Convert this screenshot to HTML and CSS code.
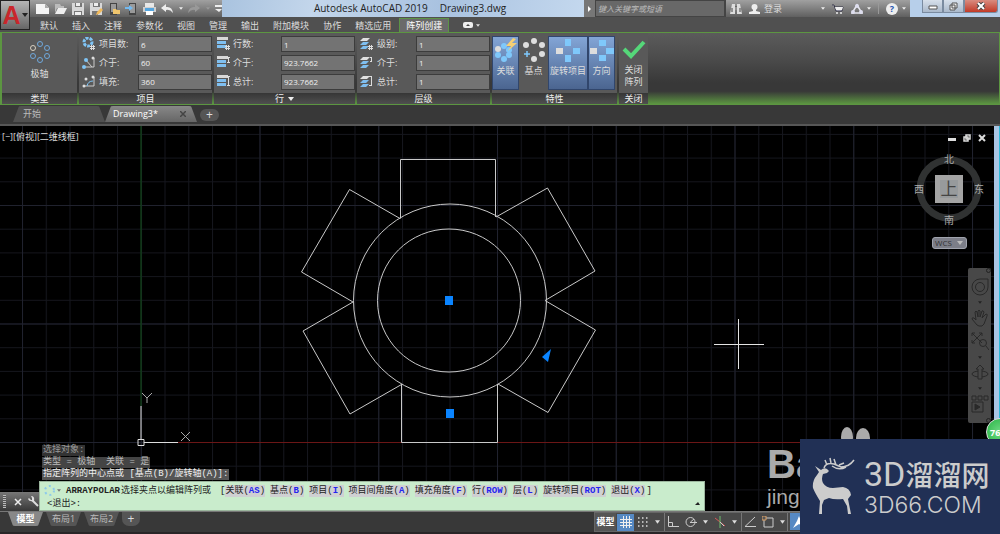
FILE: index.html
```
<!DOCTYPE html>
<html>
<head>
<meta charset="utf-8">
<title>Autodesk AutoCAD 2019 Drawing3.dwg</title>
<link rel="stylesheet" href="styles.css">
</head>
<body>
<svg class="defs" aria-hidden="true">
  <symbol id="caret" viewBox="0 0 6 4"><path d="M0 0H6L3 4Z" fill="currentColor"/></symbol>
  <symbol id="rows" viewBox="0 0 14 14"><path d="M0 0H11V3H0Z" fill="#d8d8d8"/><path d="M0 4H9V7H0ZM0 8H9V11H0Z" fill="#7fbff0"/></symbol>
  <symbol id="layers" viewBox="0 0 14 14"><path d="M3 1H10L7 4H0Z" fill="#e0e0e0"/><path d="M3 5H9L6 8H0ZM3 9H9L6 12H0Z" fill="#7fbff0"/></symbol>
</svg>

<header class="top">
  <button class="app" aria-label="菜单"><span class="logo">A</span><svg width="6" height="4"><use href="#caret"/></svg></button>
  <div class="title">
    <div class="quick">
      <button aria-label="新建"><svg width="13" height="12"><path d="M0 1H9L13 5V11H0Z" fill="#f4f4f4"/><path d="M9 1V5H13Z" fill="#aaa"/></svg></button>
      <button aria-label="打开"><svg width="13" height="12"><path d="M1 1H6L7 3H10V5H3L1 10Z" fill="#bbb"/><path d="M4 5H13L10 11H1Z" fill="#eee"/></svg></button>
      <button aria-label="保存"><svg width="13" height="12"><path d="M0 0H12V12H0Z" fill="#d8d8d8"/><path d="M3 0H10V4H3ZM2 8H10V12H2Z" fill="#777"/><path d="M4 0H8V3H4ZM3 9H9V12H3Z" fill="#eee"/></svg></button>
      <button aria-label="另存为"><svg width="13" height="12"><path d="M0 0H12V12H0Z" fill="#d8d8d8"/><path d="M3 0H10V4H3ZM2 8H8V12H2Z" fill="#777"/><path d="M4 0H8V3H4Z" fill="#eee"/><path d="M6 12L7 9L11 5L13 7L9 11Z" fill="#f0b95b"/></svg></button>
      <button aria-label="从移动设备打开"><svg width="13" height="12"><path d="M2 0H9V12H2Z" fill="#444"/><path d="M3 1H8V9H3Z" fill="#999"/><path d="M5 6H8L9 7H12V11H5Z" fill="#efc56d"/></svg></button>
      <button aria-label="保存到移动设备"><svg width="13" height="12"><path d="M4 0H11V12H4Z" fill="#444"/><path d="M5 1H10V10H5Z" fill="#999"/><path d="M0 4H4V2L8 5L4 8V6H0Z" fill="#74baf0"/></svg></button>
      <button aria-label="打印"><svg width="13" height="12"><path d="M2 0H11V4H2Z" fill="#e8e8e8"/><path d="M0 4H13V9H0Z" fill="#d0d0d0"/><path d="M2 5H11V8H2Z" fill="#54a4dd"/><path d="M3 8H10V12H3Z" fill="#fff"/></svg></button>
      <button aria-label="放弃"><svg width="13" height="12"><path d="M0 5L5 1V4Q11 3 12 10Q9 6 5 7V9Z" fill="#eee"/></svg></button>
      <svg class="light" width="4" height="3"><use href="#caret"/></svg>
      <button aria-label="重做"><svg width="13" height="12"><path d="M12 5L7 1V4Q1 3 0 10Q3 6 7 7V9Z" fill="#999"/></svg></button>
      <svg class="dim" width="4" height="3"><use href="#caret"/></svg>
      <button aria-label="自定义"><svg width="7" height="8"><path d="M0 0H7V2H0ZM0 4H7L4 7Z" fill="#eee"/></svg></button>
    </div>
    <div class="caption"><span>Autodesk AutoCAD 2019</span><span>Drawing3.dwg</span></div>
    <div class="search"><button class="arrow" aria-label="展开"><svg width="3" height="6"><path d="M0 0L3 3L0 6Z" fill="#fff"/></svg></button><input type="text" aria-label="搜索" placeholder="键入关键字或短语"></div>
    <div class="account">
      <button aria-label="查找"><svg width="12" height="12"><path d="M2 1H5V4H7V1H10L12 11H7V7H5V11H0Z" fill="#ddd"/><path d="M2 5V9M10 5V9M6 3V7" stroke="#444" stroke-width="1"/></svg></button>
      <button class="login"><svg width="11" height="12"><circle cx="5.500" cy="4" r="3" fill="#eee"/><path d="M4 6H7V8L11 9V11H0V9L4 8Z" fill="#eee"/></svg>登录</button>
      <svg class="light push" width="4" height="3"><use href="#caret"/></svg>
      <button aria-label="商店"><svg width="12" height="12"><path d="M0 2H2L4 8H10L11 4H3" fill="#dde" stroke="#334" stroke-width="1"/><path d="M3 4H11L10 7H4Z" fill="#eee"/><circle cx="5" cy="10" r="1" fill="#eee"/><circle cx="9" cy="10" r="1" fill="#eee"/></svg></button>
      <button class="pair" aria-label="应用"><svg width="12" height="12"><path d="M6 2L11 10H1Z" fill="none" stroke="#e8e8f0" stroke-width="1.500"/><circle cx="6" cy="3" r="2" fill="#dde"/><circle cx="2" cy="9" r="2" fill="#dde"/><circle cx="10" cy="9" r="2" fill="#dde"/></svg><svg class="light" width="4" height="3"><use href="#caret"/></svg></button>
      <i class="rule"></i>
      <button class="pair" aria-label="帮助"><span class="help">?</span><svg class="light" width="4" height="3"><use href="#caret"/></svg></button>
    </div>
    <div class="window">
      <button aria-label="最小化"><svg width="10" height="8"><path d="M1 4H9V7H1Z" fill="#fff" stroke="#555"/></svg></button><button aria-label="还原"><svg width="9" height="9"><path d="M3 1H8V6H3ZM1 3H6V8H1Z" fill="#eee" stroke="#555"/></svg></button><button class="close" aria-label="关闭"><svg width="10" height="8"><path d="M2 1L8 7M8 1L2 7" stroke="#444" stroke-width="4"/><path d="M2 1L8 7M8 1L2 7" stroke="#fff" stroke-width="2"/></svg></button>
    </div>
  </div>
  <nav class="menu">
    <a href="#">默认</a><a href="#">插入</a><a href="#">注释</a><a href="#">参数化</a><a href="#">视图</a><a href="#">管理</a><a href="#">输出</a><a href="#">附加模块</a><a href="#">协作</a><a href="#">精选应用</a><a href="#" class="on">阵列创建</a>
    <button aria-label="最小化功能区"><svg width="10" height="6"><rect width="10" height="6" rx="2" fill="#eee"/><path d="M3 4L5 2L7 4Z" fill="#444"/></svg><svg width="4" height="3"><use href="#caret"/></svg></button>
  </nav>
</header>

<section class="ribbon">
  <div class="panel type">
    <div class="body"><button class="tool"><svg width="24" height="25" fill="none" stroke="#6fa8dc"><circle cx="12" cy="4" r="2.500"/><circle cx="19" cy="8" r="2.500"/><circle cx="19" cy="16" r="2.500"/><circle cx="12" cy="20" r="2.500"/><circle cx="5" cy="16" r="2.500"/><circle cx="5" cy="8" r="2.500" stroke="#d8d0c0"/></svg>极轴</button></div>
    <h2>类型</h2>
  </div>
  <div class="panel items">
    <div class="body form">
      <svg width="14" height="14"><circle cx="6" cy="5" r="4" fill="none" stroke="#7fc4f5" stroke-width="3" stroke-dasharray="3 1"/><path d="M8 9.500H13M8 11.500H13M9.500 8V13M11.500 8V13" stroke="#ddd"/></svg><label for="n1">项目数:</label><input id="n1" value="6">
      <svg width="14" height="14"><path d="M3 3L10 11M12 2V11H3" stroke="#ccc" fill="none"/><circle cx="4" cy="4" r="2" fill="#7fc4f5"/><circle cx="2" cy="11" r="2" fill="#7fc4f5"/><circle cx="11" cy="2" r="1.500" fill="#ddd"/></svg><label for="n2">介于:</label><input id="n2" value="60">
      <svg width="14" height="14"><path d="M12 2V11H3" stroke="#ccc" fill="none"/><path d="M5 11Q6 6 11 6" stroke="#7fc4f5" fill="none"/><circle cx="4" cy="4" r="1.500" fill="#ddd"/><circle cx="2" cy="11" r="1.500" fill="#ddd"/><circle cx="11" cy="2" r="1.500" fill="#ddd"/></svg><label for="n3">填充:</label><input id="n3" value="360">
    </div>
    <h2>项目</h2>
  </div>
  <div class="panel rowset">
    <div class="body form">
      <svg width="14" height="14"><use href="#rows"/><path d="M8 9.500H13M8 11.500H13M9.500 8V13M11.500 8V13" stroke="#ddd"/></svg><label for="r1">行数:</label><input id="r1" value="1">
      <svg width="14" height="14"><use href="#rows"/><path d="M10 1.500H13M10 6.500H13M11.500 2V6" stroke="#ddd"/></svg><label for="r2">介于:</label><input id="r2" value="923.7662">
      <svg width="14" height="14"><use href="#rows"/><path d="M10 1.500H13M10 10.500H13M11.500 2V10" stroke="#ddd"/></svg><label for="r3">总计:</label><input id="r3" value="923.7662">
    </div>
    <h2>行 <svg width="6" height="4"><use href="#caret"/></svg></h2>
  </div>
  <div class="panel levels">
    <div class="body form">
      <svg width="14" height="14"><use href="#layers"/><path d="M8 9.500H13M8 11.500H13M9.500 8V13M11.500 8V13" stroke="#ddd"/></svg><label for="l1">级别:</label><input id="l1" value="1">
      <svg width="14" height="14"><use href="#layers"/><path d="M10 1.500H12M10 5.500H12M11.500 2V5" stroke="#ddd"/></svg><label for="l2">介于:</label><input id="l2" value="1">
      <svg width="14" height="14"><use href="#layers"/><path d="M9 1.500H12M9 10.500H12M11.500 2V10" stroke="#ddd"/></svg><label for="l3">总计:</label><input id="l3" value="1">
    </div>
    <h2>层级</h2>
  </div>
  <div class="panel props">
    <div class="body">
      <button class="tool on"><svg width="24" height="25" fill="#7fc8fb"><circle cx="4" cy="12" r="3" fill="#ddd"/><circle cx="10" cy="9" r="3"/><circle cx="15" cy="13" r="3"/><circle cx="15" cy="18" r="3"/><circle cx="10" cy="22" r="3"/><circle cx="4" cy="18" r="3"/><path d="M19 1L12 9H17L14 14L23 6H18L22 2Z" fill="#f6cf74"/></svg>关联</button>
      <button class="tool"><svg width="24" height="25" fill="#dedede"><circle cx="12" cy="4" r="3"/><circle cx="20" cy="8" r="3"/><circle cx="20" cy="17" r="3"/><circle cx="12" cy="22" r="3"/><circle cx="4" cy="8" r="3"/><path d="M2 17H8M5 14V20" stroke="#7fc8fb" stroke-width="1.500"/></svg>基点</button>
      <button class="tool wide on"><svg width="24" height="25" fill="#7fc8fb"><path d="M0 11H7V17H0Z" fill="#ddd"/><path d="M9 2H15V9H9ZM17 11H24V17H17ZM9 18H15V25H9Z"/></svg>旋转项目</button>
      <button class="tool on"><svg width="24" height="25" fill="#7fc8fb"><path d="M0 11H7V17H0Z" fill="#ddd"/><path d="M9 3H16V9H9ZM16 11H24V17H16ZM9 18H16V24H9Z"/></svg>方向</button>
    </div>
    <h2>特性</h2>
  </div>
  <div class="panel finish">
    <div class="body"><button class="tool"><svg width="24" height="25"><path d="M2 13L9 20L22 6" fill="none" stroke="#55d779" stroke-width="4"/></svg>关闭<br>阵列</button></div>
    <h2>关闭</h2>
  </div>
</section>

<nav class="files">
  <a href="#">开始</a><a href="#" class="on">Drawing3* <svg width="6" height="6"><path d="M0 0L6 6M6 0L0 6" stroke="#444" stroke-width="1.500"/></svg></a><button aria-label="新图形">+</button>
</nav>

<main class="canvas">
  <svg class="drawing" width="100%" height="100%">
    <defs>
      <pattern id="minor" x="22" y="79" width="23.750" height="23.700" patternUnits="userSpaceOnUse"><path d="M.5 0V24M0 .5H24" stroke="#15161d" fill="none"/></pattern>
      <pattern id="major" x="22" y="79" width="118.750" height="118.500" patternUnits="userSpaceOnUse"><path d="M.5 0V119M0 .5H119" stroke="#20222e" fill="none"/></pattern>
    </defs>
    <rect width="100%" height="100%" fill="url(#minor)"/><rect width="100%" height="100%" fill="url(#major)"/>
    <path d="M141 0V280" stroke="#0b4a10"/><path d="M178 316.500H4000" stroke="#6b1616"/>
    <g transform="translate(0 -126)" fill="none" stroke="#c9c9c9">
      <circle cx="450" cy="300.500" r="96.500"/><circle cx="449" cy="300.500" r="71.500"/>
      <path d="M400.500 218.500V159.500H495.500V217M496 217L547.500 188L595 271L545 300.500L595.500 330L548 412.500L498 384M401.500 384V442.500H497.500V384M401.500 384.500L350 414L303 331L353 302L301.500 272L349.500 189.500L400 218.500"/>
      <path d="M714 344.500H764M738.500 319V369" stroke="#e4e4e4"/>
      <path d="M141 439V406M144 442.500H178M138 439.500H144V445.500H138Z" stroke="#ddd"/>
      <path d="M142 393L147 398V403M152 393L147 398M181 432L190 441M190 432L181 441" stroke="#aaa"/>
      <path d="M445 296H453V305H445ZM446 409H454V418H446ZM551 349L542 357L548 362Z" fill="#0a84ff" stroke="none"/>
    </g>
  </svg>
  <button class="viewlabel">[−][俯视][二维线框]</button>
  <div class="mdi">
    <button aria-label="最小化"><svg width="8" height="8"><path d="M0 4H8V7H0Z" fill="#ddd"/></svg></button><button aria-label="还原"><svg width="8" height="8"><path d="M3 1H7V5H3ZM1 3H5V7H1Z" fill="#000" stroke="#ddd" stroke-width="1.500"/></svg></button><button aria-label="关闭"><svg width="8" height="8"><path d="M1 1L7 7M7 1L1 7" stroke="#ddd" stroke-width="2"/></svg></button>
  </div>
  <div class="cube">
    <svg width="78" height="78"><circle cx="39" cy="39" r="29" fill="none" stroke="#303232" stroke-width="7"/><rect x="25" y="25" width="28" height="28" fill="#a4a4a4"/><rect x="30" y="30" width="18" height="18" fill="#979a9c"/>
      <g text-anchor="middle" font-size="10" fill="#aaa"><text x="39" y="13">北</text><text x="39" y="74">南</text><text x="9" y="43">西</text><text x="69" y="43">东</text></g>
      <text x="39" y="45" text-anchor="middle" font-size="17" fill="#444">上</text></svg>
    <button>WCS <svg width="6" height="4"><use href="#caret"/></svg></button>
  </div>
  <div class="navbar">
    <svg width="5" height="5"><circle cx="2.500" cy="2.500" r="2" fill="none" stroke="#222"/></svg>
    <button aria-label="控制盘"><svg width="18" height="18" fill="none" stroke="#292929"><path d="M9 1H17V9A8 8 0 1 1 9 1Z"/><circle cx="9" cy="9" r="4.500"/></svg></button><svg class="drop" width="4" height="3"><use href="#caret"/></svg>
    <button aria-label="平移"><svg width="18" height="18" fill="none" stroke="#292929"><path d="M6 16L1 10Q1 8 3 9L5 11L4 3Q5 1 6 3L7 8V2Q8 0 9 2V8L11 2Q12 1 13 3L11 9L15 5Q17 5 16 7L13 15L11 17H8Z"/></svg></button>
    <button aria-label="缩放"><svg width="18" height="18" fill="none" stroke="#292929"><path d="M1 1L11 11M11 1L1 11M1 4V1H4M8 1H11V4M1 8V11H4M15 14L18 18"/><circle cx="12" cy="11" r="3.500"/></svg></button><svg class="drop" width="4" height="3"><use href="#caret"/></svg>
    <button aria-label="动态观察"><svg width="18" height="18" fill="none" stroke="#292929"><ellipse cx="9" cy="10" rx="8" ry="3"/><path d="M7 15V5H5L9 1L13 5H11V15Z" fill="#484848"/></svg></button><svg class="drop" width="4" height="3"><use href="#caret"/></svg>
    <button aria-label="ShowMotion"><svg width="18" height="18" fill="none" stroke="#292929"><path d="M1 1H5V5H1ZM7 1H11V5H7ZM13 1H17V5H13ZM1 7H12V17H1Z"/><path d="M4 9L9 12L4 15Z" fill="#292929"/></svg></button>
    <svg width="5" height="5"><circle cx="2.500" cy="2.500" r="2" fill="none" stroke="#222"/></svg>
  </div>
  <i class="edge"></i>
  <div class="console">
    <ol class="history"><li class="h1">选择对象:</li><li class="h2">类型 = 极轴 &nbsp;关联 = 是</li><li>指定阵列的中心点或 [基点(B)/旋转轴(A)]:</li></ol>
    <div class="command">
      <div class="grip"><i></i><button aria-label="关闭"><svg width="8" height="8"><path d="M1 1L7 7M7 1L1 7" stroke="#eee" stroke-width="1.500"/></svg></button><button aria-label="自定义"><svg width="11" height="11"><path d="M4 4L10 10" stroke="#ddd" stroke-width="2"/><path d="M1 2L3 4H4V2L3 0Q7 0 6 5Q1 6 0 3Z" fill="#ddd"/></svg></button></div>
      <div class="prompt">
        <div class="line"><svg width="11" height="11"><circle cx="5.500" cy="5.500" r="4.500" fill="none" stroke="#8cc9ec" stroke-width="2" stroke-dasharray="2 3"/></svg><svg class="tiny" width="4" height="3"><use href="#caret"/></svg><b>ARRAYPOLAR</b><span>选择夹点以编辑阵列或</span><span class="open">[</span><button>关联(<em>AS</em>)</button><button>基点(<em>B</em>)</button><button>项目(<em>I</em>)</button><button>项目间角度(<em>A</em>)</button><button>填充角度(<em>F</em>)</button><button>行(<em>ROW</em>)</button><button>层(<em>L</em>)</button><button>旋转项目(<em>ROT</em>)</button><button>退出(<em>X</em>)</button><span class="end">]</span></div>
        <div class="line second"><label for="cmd">&lt;退出&gt;:</label><input id="cmd"><svg width="5" height="3"><path d="M0 3H5L3 0Z" fill="#222"/></svg></div>
      </div>
    </div>
  </div>
  <div class="credit"><svg width="30" height="15" fill="#aaa"><ellipse cx="7" cy="10" rx="6" ry="10"/><ellipse cx="23" cy="11" rx="7" ry="10"/></svg><b>Ba</b><span>jing</span></div>
</main>

<footer class="status">
  <nav class="layouts"><a href="#" class="on">模型</a><a href="#">布局1</a><a href="#">布局2</a><button aria-label="新建布局">+</button></nav>
  <div class="tray">
    <div class="group"><button class="model">模型</button><button class="blue" aria-label="栅格"><svg width="12" height="12"><path d="M0 3.500H12M0 6.500H12M0 9.500H12M3.500 0V12M6.500 0V12M9.500 0V12" stroke="#eee"/></svg></button><button aria-label="捕捉"><svg width="10" height="10"><path d="M0 1H10M0 5H10M0 9H10" stroke="#ddd" stroke-width="1.500" stroke-dasharray="1.500 2.500"/></svg></button><svg width="5" height="4"><use href="#caret"/></svg></div>
    <div class="group"><button aria-label="正交"><svg width="12" height="12" fill="none" stroke="#ccc"><path d="M1.500 0V10.500H12M1.500 6.500H5.500V10.500"/></svg></button><button aria-label="极轴"><svg width="12" height="12" fill="none" stroke="#ccc"><circle cx="5.500" cy="6" r="4.500"/><path d="M5 6.500H12M5.500 6L9 3"/></svg></button><svg width="5" height="4"><use href="#caret"/></svg><button aria-label="等轴测"><svg width="12" height="12" fill="none"><path d="M1 2L11 10" stroke="#d65757"/><path d="M6 0V12" stroke="#6cbf6c"/><path d="M6 6L10 10" stroke="#ccc"/></svg></button><svg width="5" height="4"><use href="#caret"/></svg></div>
    <div class="group last"><button aria-label="对象捕捉追踪"><svg width="12" height="12" fill="none" stroke="#ccc"><path d="M11 1L1 10.500H12"/></svg></button><button aria-label="对象捕捉"><svg width="12" height="12" fill="none" stroke="#ccc"><path d="M2 2H11V11H2Z"/><path d="M0 0H4V4H0Z" fill="#555" stroke="#d9a067"/></svg></button><svg width="5" height="4"><use href="#caret"/></svg></div>
    <button class="blue person" aria-label="注释"><svg width="12" height="12"><path d="M6 0L8 5L12 12L6 8L0 12L4 5Z" fill="#fff"/></svg></button>
  </div>
</footer>

<div class="ball">76</div>
<aside class="brand">
  <svg width="44" height="60" viewBox="0 0 44 60">
    <path d="M3 9L9 13Q12 10 15 12L17 14L15 16L11 17Q9 22 11 26Q14 31 21 31L31 30Q38 31 39 38L36 42L39 57H36L35 49L31 42Q22 43 17 41L12 43L10 48V57H7L8 44Q3 36 1 31Q0 24 5 18L7 15Z" fill="#ccc"/>
    <path d="M12 11Q14 5 22 7L29 10Q37 10 42 3M15 8L13 3M19 6L18 1M24 8L22 2M27 8L32 6M31 10L37 8M20 9Q27 14 34 10" fill="none" stroke="#ccc" stroke-width="1.500"/>
  </svg>
  <div class="words"><div class="big"><span>3D</span>溜溜网</div><div class="site">3D66.COM</div></div>
</aside>
</body>
</html>
```
FILE: styles.css
```
* { box-sizing: border-box; }
body { margin: 0; min-height: 100vh; display: flex; flex-direction: column; overflow: hidden; position: relative; background: #292527; color: #ddd; font: 9px/12px "Open Sans", "Noto Sans CJK SC", sans-serif; }
button, input { font: inherit; color: inherit; background: none; border: 0; padding: 0; margin: 0; min-width: 0; }
button { display: flex; align-items: center; justify-content: center; white-space: nowrap; }
a { color: inherit; text-decoration: none; white-space: nowrap; }
svg { display: block; flex: none; }
.defs { position: absolute; width: 0; height: 0; }
h2 { margin: 0; font-size: 9px; font-weight: 400; line-height: 11px; }

/* title bar and menu */
.top { display: grid; grid-template: 17px 15px / 30px 1fr; background: #505050; }
.app { grid-row: 1 / 3; height: 30px; gap: 1px; background: linear-gradient(#b5b5b5, #666); border: 1px solid #222; color: #222; }
.logo { font: 700 25px/28px "Liberation Sans", sans-serif; color: #c9262b; }
.title { display: flex; min-width: 0; background: linear-gradient(#a0a0a0, #606060); }
.quick { display: flex; align-items: center; gap: 5px; width: 192px; padding-left: 6px; }
.light { color: #eee; }
.dim { color: #999; }
.caption { flex: 1; display: flex; justify-content: center; gap: 12px; padding-left: 14px; background: linear-gradient(100deg, #a9c3df, #c3d6eb 25%, #a9c2e0 60%, #c4d8ee); color: #222; font-size: 10px; line-height: 17px; white-space: nowrap; }
.search { display: flex; width: 142px; background: #696969; border-right: 1px solid #444; }
.arrow { width: 11px; background: #777; }
.search input { flex: 1; background: #686868; border: 1px solid #444; padding-left: 2px; font-size: 8px; font-style: italic; }
.search input::placeholder { color: #bbb; }
.account { display: flex; align-items: center; gap: 7px; width: 184px; padding: 0 4px; }
.login { gap: 4px; }
.pair { gap: 4px; }
.push { margin-left: auto; }
.rule { width: 1px; height: 11px; background: #999; }
.help { width: 12px; height: 12px; border-radius: 50%; background: #eee; color: #2455b0; font-weight: 700; text-align: center; }
.window { display: flex; width: 90px; padding: 0 2px 4px 12px; background: #b7cfea; }
.window button { width: 21px; border: 1px solid #7a8ba0; border-top: 0; background: linear-gradient(#d7e0eb, #aab9cb); }
.window .close { flex: 1; background: linear-gradient(#d98c80, #c13a28); border-radius: 0 0 3px 0; }
.menu { display: flex; align-items: flex-end; gap: 14px; padding-left: 10px; }
.menu .on { margin-left: -6px; padding: 0 6px; background: #6a6a6a; border: 1px solid #5d9446; border-bottom: 0; color: #fff; }
.menu a { line-height: 13px; }
.menu button { gap: 3px; height: 14px; }

/* ribbon */
.ribbon { display: flex; gap: 2px; border: solid #5c9641; border-width: 1px 1px 1px 2px; background: linear-gradient(#5b5b5b, #4c4c4c 35%, #383838 70%, #383838 82%, #5c9641); }
.panel { display: flex; flex-direction: column; background: #595959; }
.body { height: 60px; display: flex; padding: 3px 1px; }
.panel h2 { display: flex; justify-content: center; align-items: center; gap: 4px; height: 11px; background: linear-gradient(#363636, #4f4f4f); color: #eee; }
.type { width: 75px; }
.type .body { padding-top: 7px; justify-content: center; }
.items { width: 133px; }
.rowset { width: 141px; }
.levels { width: 133px; }
.props { width: 125px; }
.finish { width: 29px; }
.form { display: grid; grid-template-columns: 14px 1fr 74px; column-gap: 3px; row-gap: 2px; align-items: center; padding: 3px 0 3px 3px; }
.rowset .form { column-gap: 2px; }
.form input { width: 100%; height: 16px; border: 1px solid #3c3c3c; background: #737373; padding: 0 2px; font-size: 8px; color: #f0f0f0; }
.tool { flex-direction: column; justify-content: flex-start; gap: 3px; width: 27px; line-height: 12px; flex: none; }
.props .body { padding-left: 0; }
.tool.wide { width: 40px; }
.tool.on { border: 1px solid #31466c; background: linear-gradient(#83a5d6, #4b6590); }
.props .tool:not(.on) { width: 29px; padding-top: 1px; }

/* drawing tabs */
.files { display: flex; align-items: flex-end; height: 21px; padding: 0 0 2px 13px; background: #383838; border-bottom: 2px solid #575757; }
.files a { width: 92px; height: 16px; padding-left: 10px; border-radius: 8px 8px 0 0; clip-path: polygon(6px 0, calc(100% - 6px) 0, 100% 100%, 0 100%); background: #515151; color: #bbb; line-height: 16px; }
.files .on { display: flex; align-items: center; justify-content: space-between; padding: 0 11px 0 8px; background: linear-gradient(#888, #666); color: #fff; }
.files button { width: 19px; height: 12px; margin: 0 0 1px 3px; border-radius: 6px; background: #555; font-size: 12px; }

/* model space */
.canvas { flex: 1; position: relative; display: flex; flex-direction: column; background: #000; }
.drawing { position: absolute; inset: 0; }
.viewlabel { position: absolute; left: 2px; top: 5px; font-size: 9px; }
.mdi { position: absolute; right: 14px; top: 8px; display: flex; gap: 7px; }
.cube { position: absolute; right: 12px; top: 24px; display: flex; flex-direction: column; align-items: center; gap: 9px; }
.cube button { gap: 5px; width: 35px; height: 12px; border: 1px solid #a0a3ad; border-radius: 3px; background: #7c7e88; color: #333; font-size: 8px; }
.cube button svg { color: #bbb; }
.navbar { position: absolute; right: 9px; top: 142px; width: 23px; min-height: 155px; display: flex; flex-direction: column; align-items: center; justify-content: space-between; border-radius: 2px; background: #484848; }
.navbar > svg { color: #222; }
.navbar > svg:first-child, .navbar > svg:last-child { align-self: flex-end; }
.edge { position: absolute; right: 0; top: 0; bottom: 0; width: 6px; background: linear-gradient(90deg, #a9c5e4 75%, #29b8d8 75%); }
.console { position: relative; margin-top: auto; font: 9px/12px "Liberation Mono", "Noto Sans CJK SC", monospace; }
.history { margin: 0; padding: 0 0 0 42px; list-style: none; display: flex; flex-direction: column; align-items: flex-start; }
.history li { padding: 0 1px; background: #555; color: #f0f0f0; line-height: 11px; margin-bottom: 1px; }
.history .h1 { background: #333; color: #999; }
.history .h2 { background: #444; color: #bbb; }
.command { display: flex; align-items: flex-end; }
.grip { display: flex; align-items: center; gap: 8px; width: 39px; height: 19px; padding-left: 3px; background: linear-gradient(#777, #383838); }
.grip i { width: 3px; height: 13px; background: repeating-linear-gradient(#bbb 0 1px, #555 1px 2px); }
.grip button:last-child { margin-left: -1px; }
.prompt { min-width: 666px; height: 30px; padding: 2px 4px; background: #c9eccc; border: 1px solid #9bb59d; color: #222; }
.line { display: flex; align-items: center; height: 13px; gap: 5px; white-space: nowrap; }
.line .tiny { margin: 0 0 0 -3px; color: #777; }
.line b { margin-right: -4px; }
.line button { background: #cfd0d2; }
.line em { color: #2424f0; font-style: normal; font-weight: 700; }
.line .open { margin: 0 -5px 0 4px; }
.line .end { margin-left: -4px; }
.second { padding-left: 3px; }
.second input { flex: 1; outline: 0; }
.credit { position: absolute; right: 125px; bottom: -4px; width: 108px; height: 88px; color: #aaa; font-family: "Liberation Sans", sans-serif; }
.credit svg { margin-left: 73px; }
.credit b { display: block; font-size: 40px; line-height: 44px; }
.credit span { display: block; font-size: 21px; line-height: 22px; }

/* status bar */
.status { display: flex; justify-content: space-between; height: 21px; margin-bottom: 2px; border-top: 1px solid #777; background: #383838; }
.layouts { display: flex; align-items: flex-start; padding-left: 8px; gap: 3px; }
.layouts a { width: 35px; height: 14px; border-radius: 0 0 7px 7px; clip-path: polygon(0 0, 100% 0, calc(100% - 5px) 100%, 5px 100%); background: #555; color: #bbb; text-align: center; line-height: 14px; }
.layouts .on { background: #888; color: #fff; font-weight: 700; }
.layouts button { width: 18px; height: 14px; border-radius: 0 0 7px 7px; background: #555; font-size: 12px; }
.tray { width: 406px; display: flex; gap: 2px; background: #494949; border: 1px solid #666; }
.group { display: flex; align-items: center; gap: 6px; padding: 0 4px 0 0; border-right: 1px solid #777; }
.group:first-child { width: 70px; gap: 4px; }
.group:first-child > svg { margin-left: 3px; }
.group.last { padding-right: 2px; }
.model { width: 21px; height: 18px; background: #555; font-weight: 700; color: #fff; }
.group .blue { margin-left: -3px; }
.blue { width: 17px; background: #5689c3; height: 17px; }

/* overlays */
.ball { position: absolute; right: -14px; top: 418px; width: 28px; height: 28px; border: 1px solid #ddd; border-radius: 50%; background: radial-gradient(#70d985, #27b543); color: #fff; font-weight: 700; line-height: 28px; padding-left: 3px; }
.brand { position: absolute; right: 0; bottom: 0; width: 200px; height: 95px; display: flex; gap: 8px; padding: 18px 0 0 12px; background: #213055; color: #ccc; }
.words { display: flex; flex-direction: column; gap: 2px; white-space: nowrap; }
.big { display: flex; align-items: center; font: 500 28px/34px "Noto Sans CJK SC", sans-serif; }
.big span { font-family: Roboto, sans-serif; font-size: 34px; font-weight: 400; }
.site { font: 300 23px/24px Inter, sans-serif; }
```
